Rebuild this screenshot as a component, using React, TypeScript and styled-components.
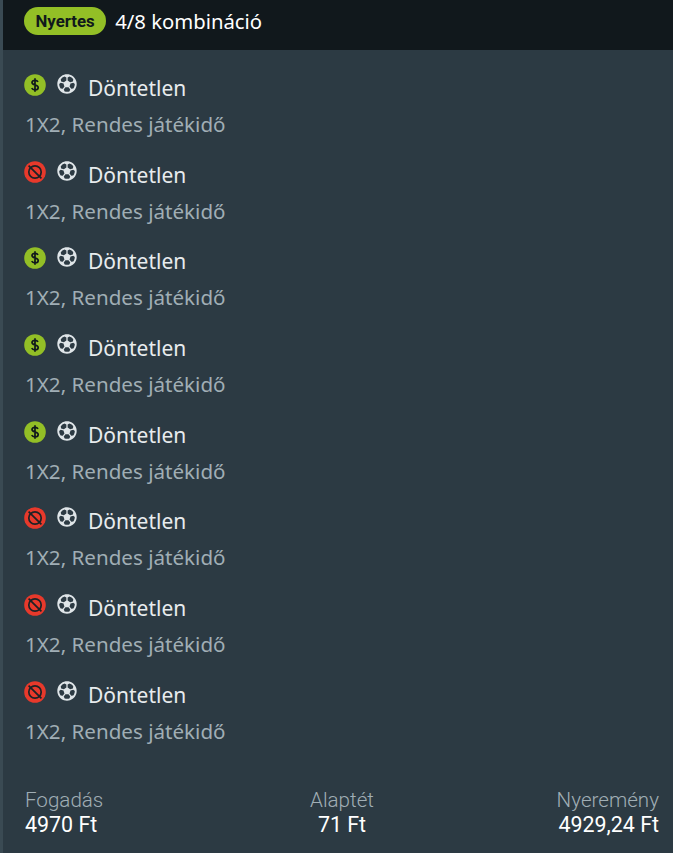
import React from "react";
import styled, { createGlobalStyle } from "styled-components";
import { FaRegFutbol } from "react-icons/fa";

const GlobalStyle = createGlobalStyle`
	html, body {
		margin: 0;
		padding: 0;
		background: #3a4a53;
	}
	body {
		font-family: "Noto Sans", "Open Sans", sans-serif;
	}
`;

const Card = styled.main`
	width: 670px;
	height: 853px;
	margin-left: 3px;
	background: #2c3a43;
	display: flex;
	flex-direction: column;
	overflow: hidden;
`;

const Header = styled.header`
	flex: 0 0 50px;
	background: #11181c;
	display: flex;
	align-items: flex-start;
	padding: 7px 0 0 21px;
	box-sizing: border-box;
	column-gap: 9px;
`;

const Badge = styled.span`
	height: 28px;
	padding: 0 11.5px;
	border-radius: 14px;
	background: #93bf26;
	color: #10181c;
	font-family: "Roboto", sans-serif;
	font-size: 16.8px;
	font-weight: 700;
	line-height: 28px;
`;

const Combo = styled.span`
	color: #ffffff;
	font-size: 20.3px;
	line-height: 28px;
`;

const LegList = styled.div`
	padding-top: 23px;
	display: flex;
	flex-direction: column;
	row-gap: 21.7px;
`;

const Leg = styled.div`
	padding-left: 21px;
	display: flex;
	flex-direction: column;
	row-gap: 10px;
`;

const LegTop = styled.div`
	height: 28px;
	display: flex;
	align-items: flex-start;
`;

const Status = styled.span`
	width: 22px;
	height: 22px;
	margin-top: 1px;
	display: block;
`;

const Sport = styled.span`
	width: 20px;
	height: 20px;
	margin: 1px 0 0 11px;
	display: block;
	color: #dfe5e8;
	font-size: 20px;
	line-height: 0;
`;

const Pick = styled.span`
	margin-left: 11px;
	margin-top: 2px;
	color: #e8ecee;
	font-size: 21px;
	line-height: 27px;
`;

const Market = styled.div`
	color: #a0aeb5;
	font-size: 20.6px;
	line-height: 27px;
	margin-left: 1px;
`;

const Footer = styled.footer`
	margin-top: auto;
	padding: 0 14px 16px 22px;
	display: grid;
	grid-template-columns: 1fr 1fr 1fr;
`;

const Stat = styled.div<{ $align: "left" | "center" | "right" }>`
	display: flex;
	flex-direction: column;
	text-align: ${(p) => p.$align};
	font-family: "Roboto", sans-serif;
`;

const StatLabel = styled.span`
	color: #a0aeb5;
	font-size: 20.6px;
	font-weight: 300;
	line-height: 24px;
`;

const StatValue = styled.span`
	color: #ffffff;
	font-size: 21.4px;
	line-height: 25px;
`;

const legs = [true, false, true, true, true, false, false, false];

const WinIcon = () => (
	<svg width="22" height="22" viewBox="0 0 22 22">
		<circle cx="11" cy="11" r="10.8" fill="#93bf26" />
		<path
			d="M14 7.9c-.5-1-1.6-1.6-3-1.6-1.8 0-3 .9-3 2.3 0 3.2 6.2 1.6 6.2 4.8 0 1.5-1.4 2.4-3.2 2.4-1.5 0-2.7-.6-3.3-1.7M11 4.2v13.6"
			fill="none"
			stroke="#10181c"
			strokeWidth="1.7"
		/>
	</svg>
);

const LoseIcon = () => (
	<svg width="22" height="22" viewBox="0 0 22 22">
		<circle cx="11" cy="11" r="10.8" fill="#e8392b" />
		<circle cx="11" cy="11" r="6.2" fill="none" stroke="#1d2226" strokeWidth="1.7" />
		<path d="M4.6 4.6l12.8 12.8" fill="none" stroke="#1d2226" strokeWidth="1.7" />
	</svg>
);

const App = () => {
	return (
		<>
			<GlobalStyle />
			<Card>
				<Header>
					<Badge>Nyertes</Badge>
					<Combo>4/8 kombináció</Combo>
				</Header>
				<LegList>
					{legs.map((won, i) => (
						<Leg key={i}>
							<LegTop>
								<Status>{won ? <WinIcon /> : <LoseIcon />}</Status>
								<Sport>
									<FaRegFutbol />
								</Sport>
								<Pick>Döntetlen</Pick>
							</LegTop>
							<Market>1X2, Rendes játékidő</Market>
						</Leg>
					))}
				</LegList>
				<Footer>
					<Stat $align="left">
						<StatLabel>Fogadás</StatLabel>
						<StatValue>4970 Ft</StatValue>
					</Stat>
					<Stat $align="center">
						<StatLabel>Alaptét</StatLabel>
						<StatValue>71 Ft</StatValue>
					</Stat>
					<Stat $align="right">
						<StatLabel>Nyeremény</StatLabel>
						<StatValue>4929,24 Ft</StatValue>
					</Stat>
				</Footer>
			</Card>
		</>
	);
};

export default App;
